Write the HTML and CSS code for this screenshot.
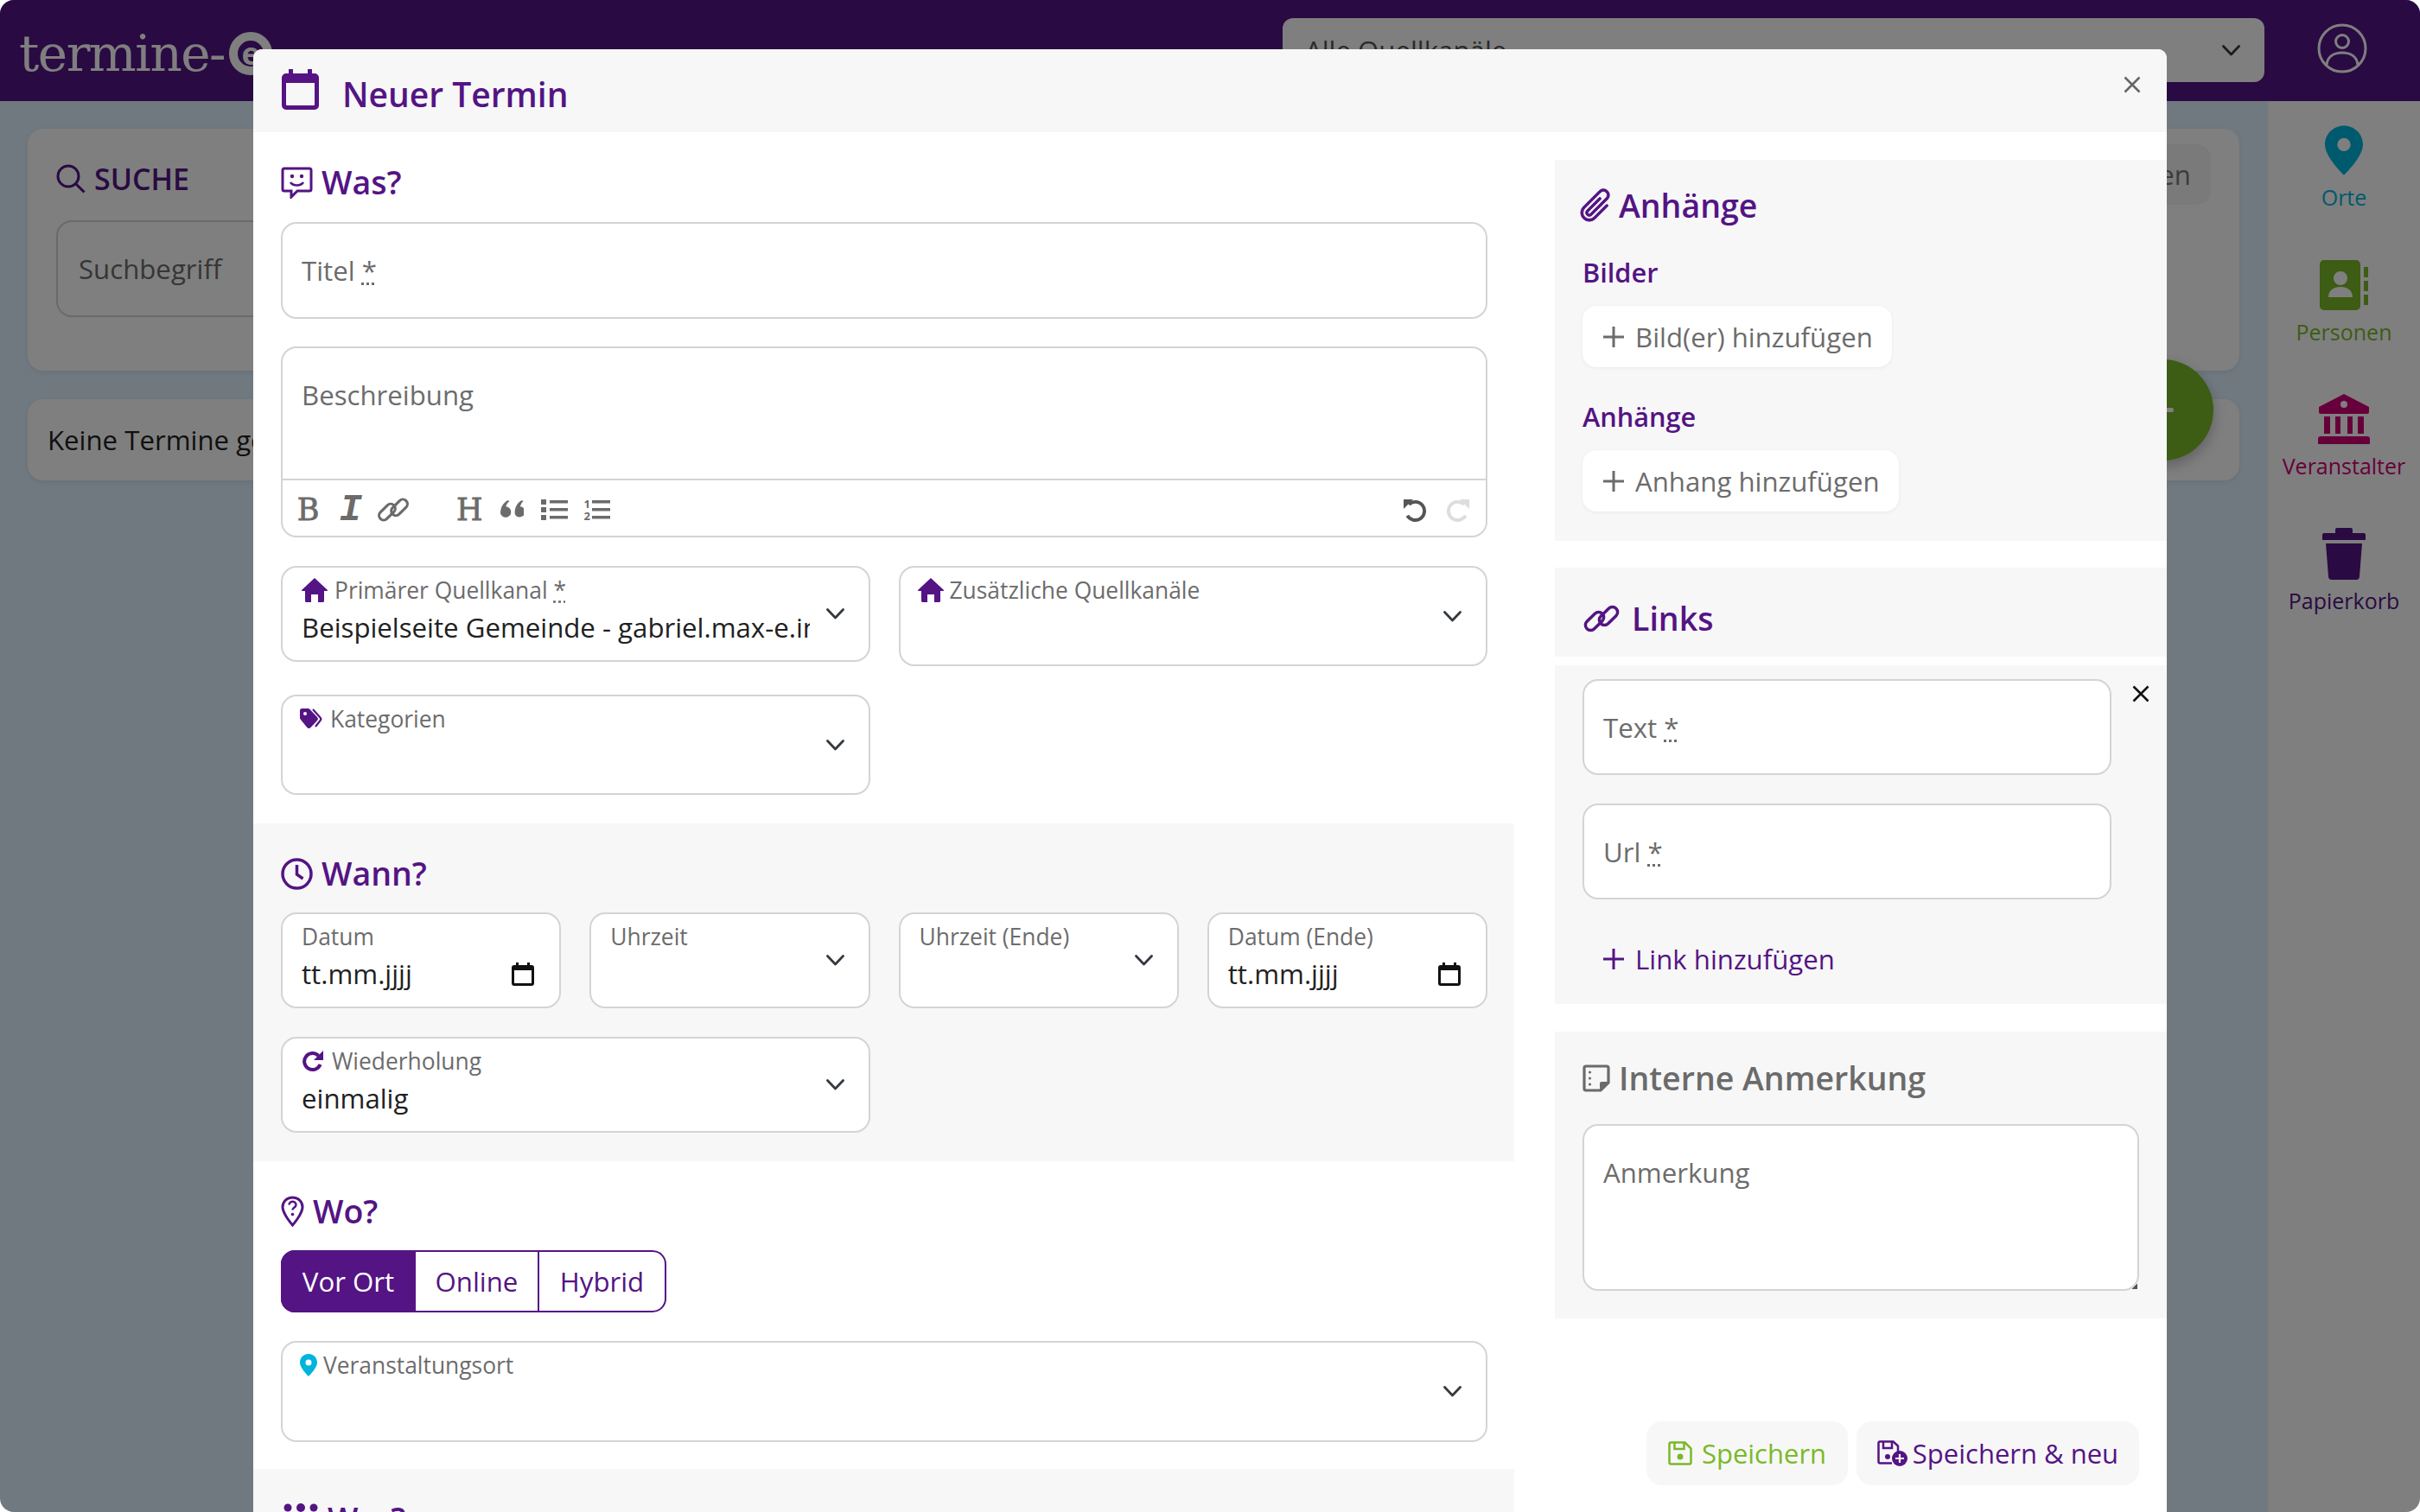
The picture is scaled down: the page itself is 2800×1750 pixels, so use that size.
FILE: index.html
```html
<!DOCTYPE html>
<html lang="de">
<head>
  <meta charset="UTF-8">
  <title>Neuer Termin - termine-e</title>
  <link rel="stylesheet" href="styles.css">
</head>
<body>
  <svg class="icon-defs" aria-hidden="true">
    <defs>
      <symbol id="i-chevron" viewBox="0 0 21 13"><path d="M1.500 1.500 10.500 11 19.500 1.500" fill="none" stroke="currentColor" stroke-width="2.800" stroke-linecap="round" stroke-linejoin="round"/></symbol>
      <symbol id="i-home" viewBox="0 0 30 28"><path fill="currentColor" d="M15 0 29.500 13.500a.8.800 0 0 1-.5 1.500H26v11.500a1.500 1.500 0 0 1-1.500 1.500H19v-9h-8v9H5.500A1.500 1.500 0 0 1 4 26.500V15H1a.8.800 0 0 1-.5-1.500z"/></symbol>
      <symbol id="i-pin" viewBox="0 0 20 26"><path fill="currentColor" fill-rule="evenodd" d="M10 0C4.500 0 0 4.300 0 10c0 6.500 10 16 10 16s10-9.500 10-16C20 4.300 15.500 0 10 0zm0 6.500a3.500 3.500 0 1 1 0 7 3.500 3.500 0 0 1 0-7z"/></symbol>
      <symbol id="i-date" viewBox="0 0 26 27"><path fill="currentColor" fill-rule="evenodd" d="M5 0h3v3h10V0h3v3h2a3 3 0 0 1 3 3v18a3 3 0 0 1-3 3H3a3 3 0 0 1-3-3V6a3 3 0 0 1 3-3h2zM3 9v14.500a.5.500 0 0 0 .5.500h19a.5.500 0 0 0 .5-.5V9z"/></symbol>
      <symbol id="i-plus" viewBox="0 0 26 26"><path d="M13 1v24M1 13h24" fill="none" stroke="currentColor" stroke-width="3"/></symbol>
      <symbol id="i-close" viewBox="0 0 20 20"><path d="m1.500 1.500 17 17m0-17-17 17" fill="none" stroke="currentColor" stroke-width="2.500"/></symbol>
      <symbol id="i-link" viewBox="0 0 44 34"><g fill="none" stroke="currentColor" stroke-width="3.500"><rect x="1.500" y="14" width="25" height="12" rx="6" transform="rotate(-45 14 20)"/><rect x="17.500" y="8" width="25" height="12" rx="6" transform="rotate(-45 30 14)"/></g></symbol>
      <symbol id="i-undo" viewBox="0 0 30 28"><path d="M7.200 7.200A11 11 0 1 1 5.500 20.500" fill="none" stroke="currentColor" stroke-width="4"/><path fill="currentColor" d="M1 1h11.500L1 12.500z"/></symbol>
    </defs>
  </svg>

  <div class="app">
    <header class="topbar">
      <div class="logo">termine-<span class="logo-e">e</span></div>
      <div class="source-select">
        <span>Alle Quellkanäle</span>
        <svg class="chevron chevron-top"><use href="#i-chevron"/></svg>
      </div>
      <svg class="user-icon" viewBox="0 0 58 58">
        <g fill="none" stroke="currentColor" stroke-width="3">
          <circle cx="29" cy="29" r="27"/>
          <circle cx="29" cy="21" r="7.500"/>
          <path d="M11 48c1-10 9-14 18-14s17 4 18 14"/>
        </g>
      </svg>
    </header>

    <div class="workspace">
      <main class="content">
        <section class="card search-card">
          <div class="search-head">
            <h2 class="search-title">
              <svg class="search-icon" viewBox="0 0 34 34"><g fill="none" stroke="currentColor" stroke-width="3"><circle cx="14" cy="14" r="12"/><path d="m23 23 9.500 9.500"/></g></svg>
              SUCHE
            </h2>
            <button class="search-btn">Suchen</button>
          </div>
          <div class="search-input">Suchbegriff</div>
        </section>
        <section class="card empty-card">Keine Termine gefunden</section>
        <button class="fab"></button>
      </main>

      <nav class="sidebar">
        <a class="side-item side-orte">
          <span class="side-icon"><svg class="pin-big"><use href="#i-pin"/></svg></span>
          Orte
        </a>
        <a class="side-item side-personen">
          <span class="side-icon">
            <svg class="book" viewBox="0 0 56 58">
              <path fill="currentColor" fill-rule="evenodd" d="M5 0h37a5 5 0 0 1 5 5v48a5 5 0 0 1-5 5H5a5 5 0 0 1-5-5V5a5 5 0 0 1 5-5zm19 13a8 8 0 1 0 0 16 8 8 0 0 0 0-16zM10 43h28c0-8-6-12-14-12s-14 4-14 12z"/>
              <path fill="currentColor" d="M51 8h5v12h-5zM51 24h5v12h-5zM51 40h5v12h-5z"/>
            </svg>
          </span>
          Personen
        </a>
        <a class="side-item side-veranstalter">
          <span class="side-icon">
            <svg class="bank" viewBox="0 0 60 58">
              <path fill="currentColor" fill-rule="evenodd" d="M30 0 59 15v6a2 2 0 0 1-2 2H3a2 2 0 0 1-2-2v-6zm0 8a4 4 0 1 0 0 8 4 4 0 0 0 0-8z"/>
              <path fill="currentColor" d="M7 26h7v20H7zM20 26h6v20h-6zM34 26h6v20h-6zM46 26h7v20h-7zM3 49h54a3 3 0 0 1 3 3v6H0v-6a3 3 0 0 1 3-3z"/>
            </svg>
          </span>
          Veranstalter
        </a>
        <a class="side-item side-papierkorb">
          <span class="side-icon">
            <svg class="trash" viewBox="0 0 50 60">
              <path fill="currentColor" d="M17 0h16a2 2 0 0 1 2 2v4h13a2 2 0 0 1 2 2v6H0V8a2 2 0 0 1 2-2h13V2a2 2 0 0 1 2-2zM4 18h42l-3 38a4 4 0 0 1-4 4H11a4 4 0 0 1-4-4z"/>
            </svg>
          </span>
          Papierkorb
        </a>
      </nav>
    </div>

    <div class="backdrop"></div>

    <div class="modal">
      <div class="modal-head">
        <svg class="modal-icon" viewBox="0 0 43 47">
          <path fill="currentColor" fill-rule="evenodd" d="M8 0h5v5h17V0h5v5h3a5 5 0 0 1 5 5v32a5 5 0 0 1-5 5H5a5 5 0 0 1-5-5V10a5 5 0 0 1 5-5h3zM5 16v25a1 1 0 0 0 1 1h31a1 1 0 0 0 1-1V16z"/>
        </svg>
        <h1 class="modal-title">Neuer Termin</h1>
        <svg class="modal-close"><use href="#i-close"/></svg>
      </div>

      <div class="modal-body">
        <div class="form-left">
          <section class="section">
            <h3 class="heading">
              <svg class="heading-icon" viewBox="0 0 37 37">
                <path d="M4 2h29a2 2 0 0 1 2 2v22a2 2 0 0 1-2 2H19l-7 7v-7H4a2 2 0 0 1-2-2V4a2 2 0 0 1 2-2z" fill="none" stroke="currentColor" stroke-width="3"/>
                <circle cx="13" cy="11" r="2.200" fill="currentColor"/><circle cx="24" cy="11" r="2.200" fill="currentColor"/>
                <path d="M11 18c3 4.500 12 4.500 15 0" fill="none" stroke="currentColor" stroke-width="2.500"/>
              </svg>
              Was?
            </h3>
            <div class="field field-plain field-title"><span class="placeholder">Titel <abbr>*</abbr></span></div>

            <div class="editor">
              <div class="editor-text placeholder">Beschreibung</div>
              <div class="toolbar">
                <span class="tool tool-serif">B</span>
                <span class="tool tool-i">I</span>
                <span class="tool"><svg class="tool-link"><use href="#i-link"/></svg></span>
                <span class="tool-spacer"></span>
                <span class="tool tool-serif">H</span>
                <span class="tool">
                  <svg class="tool-quote" viewBox="0 0 26 21"><path fill="currentColor" d="M6 7c.6-2.500 2-4.500 4-6L8.500 0C3.500 2.500 0 7.500 0 14.500A6 6 0 1 0 6 7zM22 7c.6-2.500 1.500-4.500 3.500-6L24 0c-5 2.500-8 7.500-8 14.500A5.800 5.800 0 1 0 22 7z"/></svg>
                </span>
                <span class="tool">
                  <svg class="tool-list" viewBox="0 0 31 26"><path fill="currentColor" d="M0 1h6v6H0zM0 10h6v6H0zM0 19h6v6H0zM10 2h21v3.500H10zM10 11h21v3.500H10zM10 20h21v3.500H10z"/></svg>
                </span>
                <span class="tool tool-ol">
                  <span class="ol-nums"><span>1</span><span>2</span></span>
                  <svg class="ol-lines" viewBox="0 0 21 26"><path fill="currentColor" d="M0 2h21v3.500H0zM0 11h21v3.500H0zM0 20h21v3.500H0z"/></svg>
                </span>
                <span class="toolbar-fill"></span>
                <span class="tool tool-undo"><svg><use href="#i-undo"/></svg></span>
                <span class="tool tool-redo"><svg><use href="#i-undo"/></svg></span>
              </div>
            </div>

            <div class="form-grid">
              <div class="field field-span2 field-short">
                <div class="field-main">
                  <div class="field-label"><svg class="label-home"><use href="#i-home"/></svg><span>Primärer Quellkanal <abbr>*</abbr></span></div>
                  <div class="field-value">Beispielseite Gemeinde - gabriel.max-e.info</div>
                </div>
                <svg class="chevron"><use href="#i-chevron"/></svg>
              </div>
              <div class="field field-span2 field-tall">
                <div class="field-main">
                  <div class="field-label field-label-tight"><svg class="label-home"><use href="#i-home"/></svg>Zusätzliche Quellkanäle</div>
                </div>
                <svg class="chevron"><use href="#i-chevron"/></svg>
              </div>
              <div class="field field-span2 field-tall">
                <div class="field-main">
                  <div class="field-label field-label-tag">
                    <svg class="label-tag" viewBox="0 0 27 24">
                      <path fill="currentColor" fill-rule="evenodd" d="M0 2.500A2.500 2.500 0 0 1 2.500 0h7a3 3 0 0 1 2 1l8.500 9a3 3 0 0 1 0 4l-7.500 8a3 3 0 0 1-4.200 0L1 13a3 3 0 0 1-1-2zM6 4a2 2 0 1 0 0 4 2 2 0 0 0 0-4z"/>
                      <path d="M15 1l8.500 9.500a2.500 2.500 0 0 1 0 3.500L18 21" fill="none" stroke="currentColor" stroke-width="2.200"/>
                    </svg>
                    Kategorien
                  </div>
                </div>
                <svg class="chevron"><use href="#i-chevron"/></svg>
              </div>
            </div>
          </section>

          <section class="section section-grey">
            <h3 class="heading">
              <svg class="heading-icon" viewBox="0 0 37 37"><g fill="none" stroke="currentColor" stroke-width="3.500"><circle cx="18.500" cy="18.500" r="16.500"/><path d="M18.500 8v11l7 5"/></g></svg>
              Wann?
            </h3>
            <div class="form-grid">
              <div class="field field-short">
                <div class="field-main">
                  <div class="field-label">Datum</div>
                  <div class="field-value">tt.mm.jjjj</div>
                </div>
                <svg class="date-icon"><use href="#i-date"/></svg>
              </div>
              <div class="field field-short">
                <div class="field-main"><div class="field-label">Uhrzeit</div></div>
                <svg class="chevron"><use href="#i-chevron"/></svg>
              </div>
              <div class="field field-short">
                <div class="field-main"><div class="field-label">Uhrzeit (Ende)</div></div>
                <svg class="chevron"><use href="#i-chevron"/></svg>
              </div>
              <div class="field field-short">
                <div class="field-main">
                  <div class="field-label">Datum (Ende)</div>
                  <div class="field-value">tt.mm.jjjj</div>
                </div>
                <svg class="date-icon"><use href="#i-date"/></svg>
              </div>
              <div class="field field-span2 field-short">
                <div class="field-main">
                  <div class="field-label">
                    <svg class="label-repeat" viewBox="0 0 25 25">
                      <path d="M21.500 16a9.500 9.500 0 1 1-2-10" fill="none" stroke="currentColor" stroke-width="4"/>
                      <path fill="currentColor" d="M25 0v11H14z"/>
                    </svg>
                    Wiederholung
                  </div>
                  <div class="field-value">einmalig</div>
                </div>
                <svg class="chevron"><use href="#i-chevron"/></svg>
              </div>
            </div>
          </section>

          <section class="section section-wo">
            <h3 class="heading">
              <svg class="heading-icon heading-icon-pin" viewBox="0 0 27 36">
                <path d="M13.500 2C6.600 2 2 7 2 13c0 8 11.500 21 11.500 21S25 21 25 13C25 7 20.400 2 13.500 2z" fill="none" stroke="currentColor" stroke-width="3"/>
                <path d="M9.500 10.500c0-5 8-5 8 0 0 3-4 3-4 6" fill="none" stroke="currentColor" stroke-width="2.500"/>
                <circle cx="13.500" cy="21.500" r="1.800" fill="currentColor"/>
              </svg>
              Wo?
            </h3>
            <div class="btn-group">
              <span class="seg seg-active">Vor Ort</span>
              <span class="seg seg-online">Online</span>
              <span class="seg seg-hybrid">Hybrid</span>
            </div>
            <div class="field field-ort">
              <div class="field-main">
                <div class="field-label field-label-pin"><svg class="label-pin"><use href="#i-pin"/></svg>Veranstaltungsort</div>
              </div>
              <svg class="chevron"><use href="#i-chevron"/></svg>
            </div>
          </section>

          <section class="section section-grey">
            <h3 class="heading">
              <svg class="heading-icon heading-icon-wer" viewBox="0 0 42 36">
                <g fill="currentColor"><circle cx="6" cy="5" r="4.500"/><circle cx="21" cy="5" r="5"/><circle cx="36" cy="5" r="4.500"/></g>
              </svg>
              Wer?
            </h3>
          </section>
        </div>

        <div class="form-right">
          <section class="panel panel-attach">
            <h3 class="heading">
              <svg class="panel-icon-clip" viewBox="0 0 16 16"><path transform="rotate(45 8 8)" fill="currentColor" stroke="currentColor" stroke-width=".25" d="M4.500 3a2.500 2.500 0 0 1 5 0v9a1.500 1.500 0 0 1-3 0V5a.5.500 0 0 1 1 0v7a.5.500 0 0 0 1 0V3a1.500 1.500 0 1 0-3 0v9a2.500 2.500 0 0 0 5 0V5a.5.500 0 0 1 1 0v7a3.500 3.500 0 1 1-7 0V3z"/></svg>
              Anhänge
            </h3>
            <div class="sub-title">Bilder</div>
            <div class="add-btn"><svg class="add-plus"><use href="#i-plus"/></svg>Bild(er) hinzufügen</div>
            <div class="sub-title">Anhänge</div>
            <div class="add-btn"><svg class="add-plus"><use href="#i-plus"/></svg>Anhang hinzufügen</div>
          </section>

          <section class="panel panel-links-head">
            <h3 class="heading">
              <svg class="panel-icon-link"><use href="#i-link"/></svg>
              Links
            </h3>
          </section>
          <section class="panel panel-links">
            <div class="link-row">
              <div class="link-fields">
                <div class="field field-plain"><span class="placeholder">Text <abbr>*</abbr></span></div>
                <div class="field field-plain"><span class="placeholder">Url <abbr>*</abbr></span></div>
              </div>
              <svg class="link-close"><use href="#i-close"/></svg>
            </div>
            <div class="add-btn add-btn-link"><svg class="add-plus"><use href="#i-plus"/></svg>Link hinzufügen</div>
          </section>

          <section class="panel panel-note">
            <h3 class="heading heading-grey">
              <svg class="panel-icon" viewBox="0 0 32 32">
                <path d="M4 2h24a2 2 0 0 1 2 2v17l-9 9H4a2 2 0 0 1-2-2V4a2 2 0 0 1 2-2z" fill="none" stroke="currentColor" stroke-width="3.200"/>
                <path fill="currentColor" d="M30 20h-8a2 2 0 0 0-2 2v8z"/>
                <circle cx="8.500" cy="9" r="1.600" fill="currentColor"/><circle cx="8.500" cy="16" r="1.600" fill="currentColor"/><circle cx="8.500" cy="23" r="1.600" fill="currentColor"/>
              </svg>
              Interne Anmerkung
            </h3>
            <div class="note-area"><span class="placeholder">Anmerkung</span></div>
          </section>

          <div class="actions">
            <button class="action action-save">
              <svg class="save-icon" viewBox="0 0 28 28">
                <g fill="none" stroke="currentColor" stroke-width="2.500"><path d="M3 1.500h16.500L26.500 8.500v16.500a1.500 1.500 0 0 1-1.500 1.500H3A1.500 1.500 0 0 1 1.500 25V3A1.500 1.500 0 0 1 3 1.500z"/><path d="M7.500 2v7h11V2"/></g>
                <circle cx="14" cy="18" r="3.500" fill="currentColor"/>
              </svg>
              Speichern
            </button>
            <button class="action action-new">
              <svg class="save-new-icon" viewBox="0 0 36 30">
                <g fill="none" stroke="currentColor" stroke-width="2.500"><path d="M24 13V6.500L18.500 1.500H3A1.500 1.500 0 0 0 1.500 3v22A1.500 1.500 0 0 0 3 26.500h14"/><path d="M7 2v7h10V2"/></g>
                <circle cx="12" cy="19" r="3" fill="currentColor"/>
                <circle cx="26" cy="21" r="9" fill="currentColor"/>
                <path d="M21 21h10M26 16v10" fill="none" stroke="#f7f7f7" stroke-width="2.200"/>
              </svg>
              Speichern &amp; neu
            </button>
          </div>
        </div>
      </div>
    </div>
  </div>
</body>
</html>
```

FILE: styles.css
```css
* {
  margin: 0;
  padding: 0;
  box-sizing: border-box;
}

html,
body {
  height: 100%;
  background: #ffffff;
}

body {
  font-family: 'Open Sans', 'Noto Sans', sans-serif;
  font-size: 31.2px;
  color: #212121;
  overflow: hidden;
}

.icon-defs {
  position: absolute;
  width: 0;
  height: 0;
}

svg {
  display: block;
  flex: none;
}

.app {
  position: relative;
  height: 1750px;
  display: flex;
  flex-direction: column;
  background: #dff3ff;
  border-radius: 16px;
  overflow: hidden;
}

/* background page */
.topbar {
  height: 117px;
  flex: none;
  display: flex;
  align-items: flex-start;
  background: #541484;
  color: #ffffff;
}

.logo {
  display: flex;
  align-items: center;
  height: 70px;
  margin: 27px 0 0 22px;
  font-family: 'DejaVu Serif', serif;
  font-size: 58px;
  letter-spacing: -1.5px;
}

.logo-e {
  width: 50px;
  height: 50px;
  margin-left: 5px;
  display: flex;
  align-items: center;
  justify-content: center;
  border: 10px solid #ffffff;
  border-radius: 50%;
  font-family: 'Open Sans', sans-serif;
  font-size: 36px;
  font-weight: 700;
  line-height: 30px;
  letter-spacing: 0;
}

.source-select {
  width: 1136px;
  height: 74px;
  margin: 21px 0 0 auto;
  padding: 0 28px 0 26px;
  display: flex;
  align-items: center;
  justify-content: space-between;
  background: #ffffff;
  border-radius: 12px;
  color: #555555;
}

.chevron-top {
  color: #222222;
}

.user-icon {
  width: 58px;
  height: 58px;
  margin: 27px 61px 0 61px;
}

.workspace {
  flex: 1;
  display: flex;
  min-height: 0;
}

.content {
  position: relative;
  flex: 1;
  padding: 32px 33px 0 32px;
}

.card {
  background: #ffffff;
  border-radius: 18px;
  box-shadow: 0 2px 6px rgba(0, 0, 0, 0.08);
}

.search-card {
  height: 280px;
  padding: 18px 33px 0 33px;
}

.search-head {
  height: 88px;
  display: flex;
  align-items: flex-start;
  justify-content: space-between;
}

.search-title {
  height: 80px;
  display: flex;
  align-items: center;
  gap: 10px;
  font-size: 34px;
  font-weight: 600;
  color: #541484;
}

.search-icon {
  width: 34px;
  height: 34px;
}

.search-btn {
  width: 153px;
  height: 70px;
  background: #f5f5f5;
  border: none;
  border-radius: 16px;
  font-family: inherit;
  font-size: 31.2px;
  color: #777777;
}

.search-input {
  width: 1500px;
  height: 112px;
  padding: 0 24px;
  display: flex;
  align-items: center;
  border: 2px solid #d4d4d4;
  border-radius: 18px;
  color: #6c6c6c;
}

.empty-card {
  height: 94px;
  margin-top: 33px;
  padding: 0 23px;
  display: flex;
  align-items: center;
}

.fab {
  position: absolute;
  top: 299px;
  right: 63px;
  width: 117px;
  height: 117px;
  background: #7ab929;
  border: none;
  border-radius: 50%;
  box-shadow: 0 6px 16px rgba(0, 0, 0, 0.25);
}

.fab::after {
  content: '';
  position: absolute;
  top: 56px;
  left: 45px;
  width: 26px;
  height: 5px;
  border-radius: 2px;
  background: #ffffff;
}

.sidebar {
  width: 176px;
  flex: none;
  padding-top: 27px;
  background: #ffffff;
}

.side-item {
  height: 155.5px;
  display: flex;
  flex-direction: column;
  align-items: center;
  font-size: 25px;
  line-height: 34px;
}

.side-icon {
  height: 60px;
  margin-bottom: 7px;
  display: flex;
  align-items: center;
  justify-content: center;
}

.side-orte {
  color: #00b4dc;
}

.pin-big {
  width: 44px;
  height: 58px;
}

.side-personen {
  color: #7ab929;
}

.book {
  width: 56px;
  height: 58px;
}

.side-veranstalter {
  color: #cf0075;
}

.bank {
  width: 60px;
  height: 58px;
}

.side-papierkorb {
  color: #541484;
}

.trash {
  width: 50px;
  height: 60px;
}

.backdrop {
  position: absolute;
  inset: 0;
  background: rgba(0, 0, 0, 0.5);
}

/* modal */
.modal {
  position: absolute;
  top: 57px;
  left: 293px;
  width: 2214px;
  background: #ffffff;
  border-radius: 10px 10px 0 0;
}

.modal-head {
  height: 96px;
  padding: 8px 30px 0 33px;
  display: flex;
  align-items: center;
  background: #f7f7f7;
  border-radius: 10px 10px 0 0;
  color: #541484;
}

.modal-icon {
  width: 43px;
  height: 47px;
  margin-top: -11px;
}

.modal-title {
  margin-left: 27px;
  font-size: 39px;
  font-weight: 600;
  line-height: 48px;
}

.modal-close {
  width: 20px;
  height: 20px;
  margin: -23px 0 0 auto;
  color: #666666;
}

.modal-body {
  display: flex;
  gap: 47px;
}

.form-left {
  width: 1459px;
  flex: none;
}

.form-right {
  flex: 1;
  min-width: 0;
  padding-top: 32px;
}

.section {
  padding: 34px 31px 33px 32px;
}

.section-grey {
  background: #f7f7f7;
}

.section-wo {
  padding-bottom: 31px;
}

.heading {
  height: 48px;
  margin-bottom: 21px;
  display: flex;
  align-items: center;
  gap: 10px;
  font-size: 37.5px;
  font-weight: 600;
  line-height: 48px;
  color: #541484;
}

.heading-grey {
  color: #6b6b6b;
}

.heading-icon {
  width: 37px;
  height: 37px;
}

.heading-icon-pin {
  width: 27px;
  height: 36px;
}

.heading-icon-wer {
  width: 42px;
  height: 36px;
  margin-left: 2px;
}

.form-grid {
  display: grid;
  grid-template-columns: repeat(4, 1fr);
  gap: 33px;
  align-items: start;
}

.field {
  display: flex;
  align-items: center;
  padding: 0 28px 0 22px;
  background: #ffffff;
  border: 2px solid #d4d4d4;
  border-radius: 18px;
}

.field-short {
  height: 111px;
}

.field-tall {
  height: 116px;
}

.field-ort {
  height: 117px;
}

.field-span2 {
  grid-column: span 2;
}

.field-plain {
  height: 111px;
  margin-bottom: 33px;
}

.field-title {
  height: 112px;
  margin-top: 22px;
  margin-bottom: 32px;
}

.placeholder {
  color: #6c6c6c;
}

abbr {
  text-decoration: underline dotted;
}

.field-main {
  flex: 1;
  min-width: 0;
  align-self: flex-start;
  margin-right: 19px;
  padding-top: 8px;
}

.field-label {
  height: 36px;
  display: flex;
  align-items: center;
  gap: 8px;
  white-space: nowrap;
  font-size: 26.4px;
  line-height: 36px;
  color: #6c6c6c;
}

.field-label-tag {
  margin-left: -2px;
}

.field-label-pin {
  margin-left: -2px;
  gap: 7px;
}

.field-label-tight {
  margin-left: -2px;
  gap: 7px;
}

.field-value {
  margin-top: 3px;
  overflow: hidden;
  white-space: nowrap;
  line-height: 44px;
}

.chevron {
  width: 21px;
  height: 13px;
  color: #343a40;
}

.date-icon {
  width: 26px;
  height: 27px;
  margin: 32px 1px 0 0;
  color: #111111;
}

.label-home {
  width: 30px;
  height: 28px;
  color: #541484;
}

.label-tag {
  width: 27px;
  height: 24px;
  color: #541484;
}

.label-repeat {
  width: 25px;
  height: 25px;
  color: #541484;
  margin-right: 2px;
}

.label-pin {
  width: 20px;
  height: 26px;
  color: #00b4dc;
}

/* editor */
.editor {
  height: 221px;
  margin-bottom: 33px;
  background: #ffffff;
  border: 2px solid #d4d4d4;
  border-radius: 18px;
}

.editor-text {
  height: 153px;
  padding: 30px 0 0 22px;
  line-height: 48px;
  border-bottom: 2px solid #d4d4d4;
}

.toolbar {
  height: 66px;
  padding: 2px 8px 0 5px;
  display: flex;
  align-items: center;
  color: #6b6b6b;
}

.tool {
  width: 49.2px;
  display: flex;
  align-items: center;
  justify-content: center;
  line-height: 30px;
}

.tool-serif {
  font-family: 'DejaVu Serif', serif;
  font-size: 35px;
  -webkit-text-stroke: 0.8px #6b6b6b;
}

.tool-i {
  font-family: 'Liberation Mono', monospace;
  font-size: 44px;
  font-style: italic;
  font-weight: 700;
}

.tool-spacer {
  width: 39px;
}

.toolbar-fill {
  flex: 1;
}

.tool-link {
  width: 40px;
  height: 30px;
}

.tool-quote {
  width: 27px;
  height: 22px;
}

.tool-list {
  width: 31px;
  height: 26px;
}

.tool-ol {
  gap: 2px;
}

.ol-nums {
  display: flex;
  flex-direction: column;
  font-size: 13px;
  font-weight: 700;
  line-height: 14px;
}

.ol-lines {
  width: 21px;
  height: 26px;
}

.tool-undo {
  color: #555555;
}

.tool-undo svg,
.tool-redo svg {
  width: 29px;
  height: 27px;
}

.tool-redo {
  color: #dddddd;
}

.tool-redo svg {
  transform: scaleX(-1);
}

/* Wo? */
.btn-group {
  display: flex;
  width: max-content;
  height: 72px;
  margin-bottom: 33px;
  border: 2px solid #541484;
  border-radius: 16px;
  color: #541484;
}

.seg {
  display: flex;
  align-items: center;
  justify-content: center;
}

.seg-active {
  width: 156px;
  margin: -2px 0 -2px -2px;
  background: #541484;
  border-radius: 16px 0 0 16px;
  color: #ffffff;
}

.seg-online {
  width: 143px;
  border-right: 2px solid #541484;
}

.seg-hybrid {
  width: 145px;
}

/* right column */
.panel {
  padding: 0 32px;
  background: #f7f7f7;
}

.panel-attach {
  height: 441px;
  padding-top: 29px;
}

.panel-attach .heading {
  margin-bottom: 31px;
}

.panel-icon {
  width: 32px;
  height: 36px;
}

.panel-icon-clip {
  width: 46px;
  height: 46px;
  margin: -5px -7px;
}

.panel-icon-link {
  width: 44px;
  height: 34px;
}

.panel-links-head .heading {
  gap: 13px;
}

.sub-title {
  height: 44px;
  font-size: 30.7px;
  font-weight: 600;
  line-height: 44px;
  color: #541484;
}

.add-btn {
  width: max-content;
  height: 71px;
  margin: 17px 0 35px 0;
  padding: 0 22px 0 23px;
  display: flex;
  align-items: center;
  gap: 12px;
  background: #ffffff;
  border-radius: 16px;
  box-shadow: 0 1px 4px rgba(0, 0, 0, 0.06);
  color: #6c6c6c;
}

.add-plus {
  width: 26px;
  height: 26px;
}

.add-btn-link {
  margin: 0;
  background: transparent;
  box-shadow: none;
  color: #541484;
}

.panel-links-head {
  height: 103px;
  margin-top: 31px;
  padding-top: 35px;
}

.panel-links {
  height: 392px;
  margin-top: 10px;
  padding-top: 16px;
}

.link-row {
  display: flex;
  gap: 24px;
}

.link-fields {
  width: 612px;
  flex: none;
}

.link-close {
  width: 20px;
  height: 20px;
  margin-top: 7px;
  color: #111111;
}

.panel-note {
  height: 332px;
  margin-top: 32px;
  padding-top: 30px;
}

.panel-note .heading {
  margin-bottom: 29px;
}

.note-area {
  position: relative;
  height: 193px;
  padding: 30px 22px;
  line-height: 48px;
  background: #ffffff;
  border: 2px solid #d4d4d4;
  border-radius: 18px;
}

.note-area::after {
  content: '';
  position: absolute;
  right: 0;
  bottom: 0;
  width: 8px;
  height: 8px;
  background: linear-gradient(135deg, transparent 60%, #555555 60%);
}

.actions {
  margin-top: 119px;
  padding-right: 32px;
  display: flex;
  justify-content: flex-end;
  gap: 10px;
}

.action {
  height: 74px;
  display: flex;
  align-items: center;
  justify-content: center;
  background: #f7f7f7;
  border: none;
  border-radius: 18px;
  font-family: inherit;
  font-size: 31px;
}

.action-save {
  width: 233px;
  gap: 11px;
  color: #7ab929;
}

.save-icon {
  width: 28px;
  height: 28px;
}

.action-new {
  width: 327px;
  gap: 5px;
  color: #541484;
}

.save-new-icon {
  width: 36px;
  height: 30px;
}
```
